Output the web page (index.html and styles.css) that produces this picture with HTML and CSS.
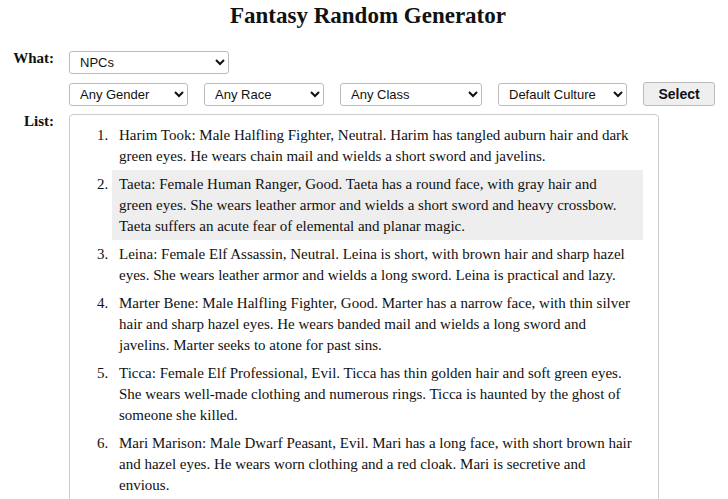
FILE: index.html
```html
<!DOCTYPE html>
<html lang="en">
<head>
    <meta charset="UTF-8">
    <title>Fantasy Random Generator</title>
    <link rel="stylesheet" href="styles.css">
</head>
<body>
    <h1>Fantasy Random Generator</h1>

    <div class="row row-what">
        <label class="label">What:</label>
        <select class="sel sel-what">
            <option>NPCs</option>
        </select>
    </div>

    <div class="row row-filters">
        <span class="label"></span>
        <div class="filters">
            <select class="sel sel-gender"><option>Any Gender</option></select>
            <select class="sel sel-race"><option>Any Race</option></select>
            <select class="sel sel-class"><option>Any Class</option></select>
            <select class="sel sel-culture"><option>Default Culture</option></select>
            <button class="btn-select">Select</button>
        </div>
    </div>

    <div class="row row-list">
        <label class="label">List:</label>
        <div class="list-box">
            <ol class="results">
                <li>Harim Took: Male Halfling Fighter, Neutral. Harim has tangled auburn hair and dark green eyes. He wears chain mail and wields a short sword and javelins.</li>
                <li class="hover">Taeta: Female Human Ranger, Good. Taeta has a round face, with gray hair and green eyes. She wears leather armor and wields a short sword and heavy crossbow. Taeta suffers an acute fear of elemental and planar magic.</li>
                <li>Leina: Female Elf Assassin, Neutral. Leina is short, with brown hair and sharp hazel eyes. She wears leather armor and wields a long sword. Leina is practical and lazy.</li>
                <li>Marter Bene: Male Halfling Fighter, Good. Marter has a narrow face, with thin silver hair and sharp hazel eyes. He wears banded mail and wields a long sword and javelins. Marter seeks to atone for past sins.</li>
                <li>Ticca: Female Elf Professional, Evil. Ticca has thin golden hair and soft green eyes. She wears well-made clothing and numerous rings. Ticca is haunted by the ghost of someone she killed.</li>
                <li>Mari Marison: Male Dwarf Peasant, Evil. Mari has a long face, with short brown hair and hazel eyes. He wears worn clothing and a red cloak. Mari is secretive and envious.</li>
            </ol>
        </div>
    </div>
</body>
</html>
```

FILE: styles.css
```css
* {
    box-sizing: border-box;
}

html, body {
    height: 100%;
    overflow: hidden;
}

body {
    margin: 0;
    background: white;
    color: #111;
    font-family: "Liberation Serif", serif;
}

h1 {
    margin: 3px 0 22px;
    padding-left: 8px;
    font-size: 23px;
    line-height: 25px;
    text-align: center;
    color: #111;
}

.row {
    display: flex;
    gap: 15px;
}

.label {
    flex: 0 0 54px;
    text-align: right;
    font-weight: bold;
    font-size: 15px;
    line-height: 17px;
}

.row-filters {
    margin-top: 8px;
}

.row-list {
    margin-top: 7px;
}

.sel {
    margin-top: 1px;
    height: 23px;
    padding: 0 6px;
    font-family: "Liberation Sans", Arial, sans-serif;
    font-size: 13px;
    color: #111;
    background: white;
    border: 1px solid #bbb;
    border-radius: 3px;
}

.sel-what { width: 160px; }

.filters {
    display: flex;
    gap: 16px;
    align-items: flex-start;
}

.sel-gender { width: 119px; }
.sel-race { width: 120px; }
.sel-class { width: 142px; }
.sel-culture { width: 129px; }

.btn-select {
    width: 72px;
    height: 24px;
    font-family: "Liberation Sans", Arial, sans-serif;
    font-size: 14px;
    font-weight: bold;
    color: #111;
    background: #efefef;
    border: 1px solid #bbb;
    border-radius: 3px;
}

.list-box {
    margin-top: 1px;
    width: 590px;
    height: 420px;
    padding: 6px 15px 0 0;
    border: 1px solid #ccc;
    border-radius: 4px;
    overflow: hidden;
}

.results {
    margin: 0;
    padding-left: 42px;
    font-size: 15px;
    line-height: 21px;
}

.results li {
    padding: 4px 10px 3px 7px;
}

.results li.hover {
    background: #eee;
}
```
